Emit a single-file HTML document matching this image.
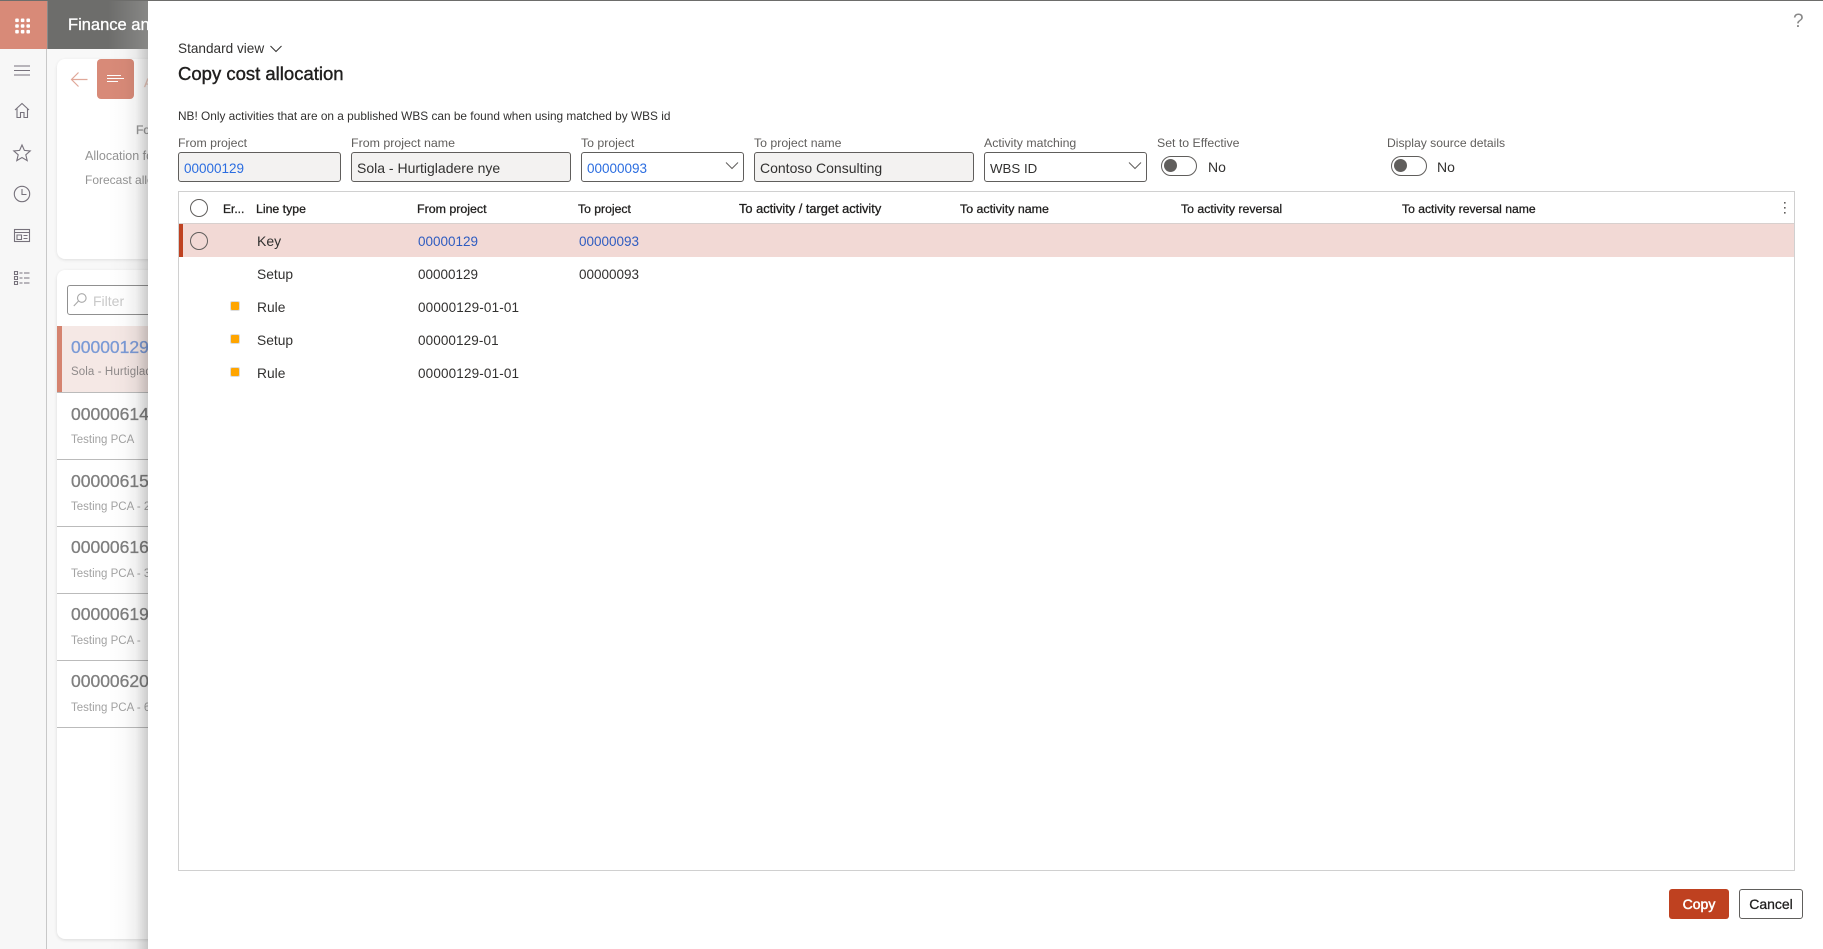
<!DOCTYPE html>
<html lang="en">
<head>
<meta charset="utf-8">
<title>Copy cost allocation</title>
<style>
html,body{margin:0;padding:0;background:#fff}
body{width:1823px;height:949px;overflow:hidden;position:relative;font-family:"Liberation Sans",sans-serif}
#bg,#panel{position:absolute;overflow:hidden}
#bg{left:0;top:0;width:1823px;height:949px;background:#f8f8f8}
.a{position:absolute}
.t{position:absolute;white-space:nowrap;line-height:20px;height:20px}
.lb{font-size:12.3px;color:#605e5c}
.inp{position:absolute;top:152px;height:28px;border:1px solid #605e5c;border-radius:3px;background:#f3f2f1;box-sizing:content-box}
.val{font-size:14px;color:#323130}
.hd{font-size:12.3px;color:#201f1e;-webkit-text-stroke:.3px #201f1e}
.c{font-size:14px;color:#323130}
.lnk{color:#2f5cc0}
.dot{position:absolute;left:230px;width:8px;height:8px;background:#ffa500;border:1px solid #ddd;border-radius:2px;box-sizing:content-box}
.id{font-size:17.5px;color:#7f7f7f;-webkit-text-stroke:.3px #7f7f7f;left:71px}
.sub{font-size:11.5px;color:#a3a3a3;left:71px}
.sep{position:absolute;left:57px;width:91px;height:1px;background:#bbb}
</style>
</head>
<body>
<div id="bg">
  <!-- top bar -->
  <div class="a" style="left:0;top:0;width:148px;height:49px;background:#6d6d6b"></div>
  <div class="a" style="left:0;top:1px;width:47px;height:48px;background:#d88a78"></div>
  <div class="a" style="left:47px;top:1px;width:1px;height:48px;background:#8a8a88"></div>
  <svg class="a" style="left:14px;top:17px" width="18" height="18" fill="#fff">
    <rect x="1.200" y="1.500" width="3.600" height="3.600" rx="1"/><rect x="6.800" y="1.500" width="3.600" height="3.600" rx="1"/><rect x="12.400" y="1.500" width="3.600" height="3.600" rx="1"/>
    <rect x="1.200" y="7.200" width="3.600" height="3.600" rx="1"/><rect x="6.800" y="7.200" width="3.600" height="3.600" rx="1"/><rect x="12.400" y="7.200" width="3.600" height="3.600" rx="1"/>
    <rect x="1.200" y="12.900" width="3.600" height="3.600" rx="1"/><rect x="6.800" y="12.900" width="3.600" height="3.600" rx="1"/><rect x="12.400" y="12.900" width="3.600" height="3.600" rx="1"/>
  </svg>
  <div class="t" style="left:68px;top:15px;font-size:16.500px;color:#fff;-webkit-text-stroke:.3px #fff">Finance and</div>

  <!-- sidebar -->
  <div class="a" style="left:0;top:49px;width:46px;height:900px;background:#f7f7f7;border-right:1px solid #c8c8c8"></div>
  <svg class="a" style="left:0;top:49px" width="46" height="250" fill="none" stroke="#77727c" stroke-width="1.100">
    <path d="M14 17h16M14 21.500h16M14 26h16"/>
    <path d="M15 61 22 54.500l7 6.500M17 59.500v9h3.500v-5h3.500v5h3.500v-9" />
    <path d="M22 96l2.400 5.400 5.800.5-4.400 3.900 1.400 5.800-5.200-3.100-5.200 3.100 1.400-5.800-4.400-3.900 5.800-.5z"/>
    <circle cx="22" cy="145" r="7.700"/><path d="M22 140v5.500h4.500"/>
    <rect x="14.500" y="180.500" width="15" height="12"/><path d="M14.500 183.500h15M17 186h4.500v4.500H17zM23.500 186.500h4M23.500 189.500h4"/>
    <path d="M14.500 222.500h3v3h-3zM14.500 227.500h3v3h-3zM14.500 232.500h3v3h-3zM19.500 224h3M24 224h5.500M19.500 229h3M24 229h5.500M19.500 234h3M24 234h5.500"/>
  </svg>

  <!-- card 1 -->
  <div class="a" style="left:57px;top:59px;width:120px;height:200px;background:#fff;border-radius:8px;box-shadow:0 1px 3px rgba(0,0,0,.1)"></div>
  <svg class="a" style="left:68px;top:68px" width="22" height="22" fill="none" stroke="#e0a899" stroke-width="1.200"><path d="M3.500 11.500h16M10.500 4.500l-7 7 7 7"/></svg>
  <div class="a" style="left:97px;top:59px;width:37px;height:40px;background:#d88a78;border-radius:4px"></div>
  <svg class="a" style="left:97px;top:59px" width="37" height="40" stroke="#fff" stroke-width="1" fill="none"><path d="M10 16.500h14M10 19.500h17M10 22.500h11"/></svg>
  <div class="t" style="left:144px;top:73px;font-size:12px;color:#eccabf;-webkit-text-stroke:.3px #eccabf">A</div>
  <div class="t" style="left:136px;top:120px;font-size:12px;color:#9a9a9a;-webkit-text-stroke:.3px #9a9a9a">Fo</div>
  <div class="t" style="left:85px;top:146px;font-size:12.500px;color:#949494">Allocation fo</div>
  <div class="t" style="left:85px;top:170px;font-size:12px;color:#949494">Forecast allo</div>

  <!-- card 2 -->
  <div class="a" style="left:57px;top:270px;width:120px;height:669px;background:#fff;border-radius:8px;box-shadow:0 1px 3px rgba(0,0,0,.12)"></div>
  <div class="a" style="left:67px;top:285px;width:100px;height:28px;border:1px solid #909090;border-radius:3px"></div>
  <svg class="a" style="left:72px;top:292px" width="16" height="16" fill="none" stroke="#a8a8a8" stroke-width="1.100"><circle cx="9.800" cy="6" r="4.300"/><path d="M6.500 9 1.800 14"/></svg>
  <div class="t" style="left:93px;top:291px;font-size:14px;color:#c9c9c9">Filter</div>

  <div class="a" style="left:57px;top:326px;width:91px;height:66px;background:#f5e8e5"></div>
  <div class="a" style="left:57px;top:326px;width:5px;height:66px;background:#d5836f"></div>
  <div class="t id" style="top:337px;color:#7b9ad6;-webkit-text-stroke:.3px #7b9ad6">00000129</div>
  <div class="t sub" style="top:362px;color:#8f8a8a;letter-spacing:.1px">Sola - Hurtigladere nye</div>
  <div class="sep" style="top:392px"></div>
  <div class="t id" style="top:404px">00000614</div>
  <div class="t sub" style="top:430px">Testing PCA</div>
  <div class="sep" style="top:459px"></div>
  <div class="t id" style="top:471px">00000615</div>
  <div class="t sub" style="top:497px">Testing PCA - 2</div>
  <div class="sep" style="top:526px"></div>
  <div class="t id" style="top:537px">00000616</div>
  <div class="t sub" style="top:564px">Testing PCA - 3</div>
  <div class="sep" style="top:593px"></div>
  <div class="t id" style="top:604px">00000619</div>
  <div class="t sub" style="top:631px">Testing PCA -</div>
  <div class="sep" style="top:660px"></div>
  <div class="t id" style="top:671px">00000620</div>
  <div class="t sub" style="top:698px">Testing PCA - 6</div>
  <div class="sep" style="top:727px"></div>

  <!-- panel shadow -->
  <div class="a" style="left:108px;top:49px;width:40px;height:900px;background:linear-gradient(to right,rgba(0,0,0,0) 0%,rgba(0,0,0,.015) 40%,rgba(0,0,0,.06) 70%,rgba(0,0,0,.2) 100%)"></div>
  <div class="a" style="left:108px;top:1px;width:40px;height:48px;background:linear-gradient(to right,rgba(255,255,255,0),rgba(255,255,255,.18))"></div>
  <div class="a" style="left:0;top:0;width:1823px;height:1px;background:#6d6d6b"></div>
</div>

<div id="panel" style="left:148px;top:1px;width:1675px;height:948px;background:#fff"></div>

<!-- dialog -->
<div class="t" style="left:1793px;top:12px;font-size:19px;color:#888">?</div>
<div class="t" style="left:178px;top:39px;font-size:13.600px;color:#323130">Standard view</div>
<svg class="a" style="left:269px;top:44px" width="14" height="10" fill="none" stroke="#323130" stroke-width="1"><path d="M1.500 2 7 7.500 12.500 2"/></svg>
<div class="t" style="left:178px;top:64px;font-size:18.500px;color:#201f1e;-webkit-text-stroke:.4px #201f1e">Copy cost allocation</div>
<div class="t" style="left:178px;top:106px;font-size:11.850px;color:#323130">NB! Only activities that are on a published WBS can be found when using matched by WBS id</div>

<div class="t lb" style="left:178px;top:133px">From project</div>
<div class="inp" style="left:178px;width:161px"></div>
<div class="t val" style="left:184px;top:159px;color:#2b6de0;font-size:13.500px">00000129</div>

<div class="t lb" style="left:351px;top:133px;font-size:12.400px">From project name</div>
<div class="inp" style="left:351px;width:218px"></div>
<div class="t val" style="left:357px;top:158px">Sola - Hurtigladere nye</div>

<div class="t lb" style="left:581px;top:133px">To project</div>
<div class="inp" style="left:581px;width:161px;background:#fff"></div>
<div class="t val" style="left:587px;top:159px;color:#2b6de0;font-size:13.500px">00000093</div>
<svg class="a" style="left:725px;top:161px" width="14" height="10" fill="none" stroke="#605e5c" stroke-width="1"><path d="M1 1.500 7 7.500 13 1.500"/></svg>

<div class="t lb" style="left:754px;top:133px">To project name</div>
<div class="inp" style="left:754px;width:218px"></div>
<div class="t val" style="left:760px;top:158px">Contoso Consulting</div>

<div class="t lb" style="left:984px;top:133px">Activity matching</div>
<div class="inp" style="left:984px;width:161px;background:#fff"></div>
<div class="t val" style="left:990px;top:159px;font-size:13.300px">WBS ID</div>
<svg class="a" style="left:1128px;top:161px" width="14" height="10" fill="none" stroke="#605e5c" stroke-width="1"><path d="M1 1.500 7 7.500 13 1.500"/></svg>

<div class="t lb" style="left:1157px;top:133px">Set to Effective</div>
<div class="a" style="left:1161px;top:156px;width:34px;height:18px;border:1px solid #605e5c;border-radius:10px"></div>
<div class="a" style="left:1164px;top:159px;width:13px;height:13px;border-radius:50%;background:#605e5c"></div>
<div class="t" style="left:1208px;top:157px;font-size:14px;color:#323130">No</div>

<div class="t lb" style="left:1387px;top:133px;font-size:12.150px">Display source details</div>
<div class="a" style="left:1391px;top:156px;width:34px;height:18px;border:1px solid #605e5c;border-radius:10px"></div>
<div class="a" style="left:1394px;top:159px;width:13px;height:13px;border-radius:50%;background:#605e5c"></div>
<div class="t" style="left:1437px;top:157px;font-size:14px;color:#323130">No</div>

<!-- grid -->
<div class="a" style="left:178px;top:191px;width:1615px;height:678px;border:1px solid #d0d0d0"></div>
<div class="a" style="left:179px;top:223px;width:1615px;height:1px;background:#d8d0ce"></div>
<div class="a" style="left:179px;top:224px;width:1615px;height:33px;background:#f2d9d5"></div>
<div class="a" style="left:179px;top:224px;width:4px;height:33px;background:#bf4120"></div>

<div class="a" style="left:190px;top:199px;width:16px;height:16px;border:1px solid #605e5c;border-radius:50%"></div>
<div class="a" style="left:190px;top:232px;width:16px;height:16px;border:1px solid #605e5c;border-radius:50%"></div>

<div class="t hd" style="left:223px;top:199px;font-size:12px">Er...</div>
<div class="t hd" style="left:256px;top:199px">Line type</div>
<div class="t hd" style="left:417px;top:199px;font-size:12.400px">From project</div>
<div class="t hd" style="left:578px;top:199px;font-size:12.200px">To project</div>
<div class="t hd" style="left:739px;top:199px;font-size:12.800px">To activity / target activity</div>
<div class="t hd" style="left:960px;top:199px;font-size:12.400px">To activity name</div>
<div class="t hd" style="left:1181px;top:199px">To activity reversal</div>
<div class="t hd" style="left:1402px;top:199px;font-size:12.150px">To activity reversal name</div>
<svg class="a" style="left:1783px;top:200px" width="4" height="16" fill="#605e5c"><rect x="1" y="2" width="1.600" height="1.600"/><rect x="1" y="7" width="1.600" height="1.600"/><rect x="1" y="12" width="1.600" height="1.600"/></svg>

<div class="t c" style="left:257px;top:231px">Key</div>
<div class="t c lnk" style="left:418px;top:232px;font-size:13.500px">00000129</div>
<div class="t c lnk" style="left:579px;top:232px;font-size:13.500px">00000093</div>

<div class="t c" style="left:257px;top:265px;font-size:13.800px">Setup</div>
<div class="t c" style="left:418px;top:265px;font-size:13.500px">00000129</div>
<div class="t c" style="left:579px;top:265px;font-size:13.500px">00000093</div>

<div class="dot" style="top:301px"></div>
<div class="t c" style="left:257px;top:298px;font-size:13.800px">Rule</div>
<div class="t c" style="left:418px;top:298px;font-size:13.500px;letter-spacing:.15px">00000129-01-01</div>

<div class="dot" style="top:334px"></div>
<div class="t c" style="left:257px;top:331px;font-size:13.800px">Setup</div>
<div class="t c" style="left:418px;top:331px;font-size:13.500px;letter-spacing:.1px">00000129-01</div>

<div class="dot" style="top:367px"></div>
<div class="t c" style="left:257px;top:364px;font-size:13.800px">Rule</div>
<div class="t c" style="left:418px;top:364px;font-size:13.500px;letter-spacing:.15px">00000129-01-01</div>

<!-- buttons -->
<div class="a" style="left:1669px;top:889px;width:60px;height:30px;background:#bf4120;border-radius:3px"></div>
<div class="t" style="left:1669px;top:894px;width:60px;text-align:center;font-size:14px;color:#fff;-webkit-text-stroke:.5px #fff">Copy</div>
<div class="a" style="left:1739px;top:889px;width:62px;height:28px;background:#fff;border:1px solid #605e5c;border-radius:3px"></div>
<div class="t" style="left:1739px;top:894px;width:64px;text-align:center;font-size:14px;color:#201f1e;-webkit-text-stroke:.3px #201f1e">Cancel</div>
</body>
</html>
